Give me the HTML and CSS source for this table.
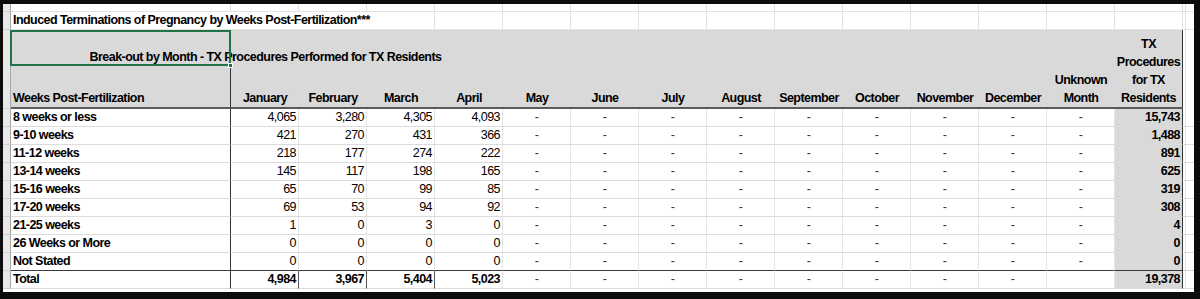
FILE: index.html
```html
<!DOCTYPE html>
<html>
<head>
<meta charset="utf-8">
<link rel="stylesheet" href="styles.css">
</head>
<body>
<div class="frame">
  <div class="row top">
    <div class="g"></div><div></div><div></div><div></div><div></div><div></div><div></div><div></div><div></div><div></div><div></div><div></div><div></div><div></div><div></div><div></div><div class="x"></div>
  </div>
  <div class="row title">
    <div class="g"></div>
    <div class="ttl">Induced Terminations of Pregnancy by Weeks Post-Fertilization***</div>
    <div></div><div></div><div></div><div></div><div></div><div></div><div></div><div></div><div></div><div></div><div></div><div class="x"></div>
  </div>
  <div class="head">
    <div class="g hg"></div>
    <div class="breakout">Break-out by Month - TX Procedures Performed for TX Residents</div>
    <div class="sel"></div>
    <div class="hA">Weeks Post-Fertilization</div>
    <div class="hm">January</div>
    <div class="hm">February</div>
    <div class="hm">March</div>
    <div class="hm">April</div>
    <div class="hm">May</div>
    <div class="hm">June</div>
    <div class="hm">July</div>
    <div class="hm">August</div>
    <div class="hm">September</div>
    <div class="hm">October</div>
    <div class="hm">November</div>
    <div class="hm">December</div>
    <div class="hm">Unknown<br>Month</div>
    <div class="htx">TX<br>Procedures<br>for TX<br>Residents</div>
    <div class="hx"></div>
  </div>

  <div class="row data">
    <div class="g"></div><div class="lab">8 weeks or less</div>
    <div class="n">4,065</div><div class="n">3,280</div><div class="n">4,305</div><div class="n">4,093</div>
    <div class="d">-</div><div class="d">-</div><div class="d">-</div><div class="d">-</div><div class="d">-</div><div class="d">-</div><div class="d">-</div><div class="d">-</div><div class="d">-</div>
    <div class="tx">15,743</div><div class="x"></div>
  </div>
  <div class="row data">
    <div class="g"></div><div class="lab">9-10 weeks</div>
    <div class="n">421</div><div class="n">270</div><div class="n">431</div><div class="n">366</div>
    <div class="d">-</div><div class="d">-</div><div class="d">-</div><div class="d">-</div><div class="d">-</div><div class="d">-</div><div class="d">-</div><div class="d">-</div><div class="d">-</div>
    <div class="tx">1,488</div><div class="x"></div>
  </div>
  <div class="row data">
    <div class="g"></div><div class="lab">11-12 weeks</div>
    <div class="n">218</div><div class="n">177</div><div class="n">274</div><div class="n">222</div>
    <div class="d">-</div><div class="d">-</div><div class="d">-</div><div class="d">-</div><div class="d">-</div><div class="d">-</div><div class="d">-</div><div class="d">-</div><div class="d">-</div>
    <div class="tx">891</div><div class="x"></div>
  </div>
  <div class="row data">
    <div class="g"></div><div class="lab">13-14 weeks</div>
    <div class="n">145</div><div class="n">117</div><div class="n">198</div><div class="n">165</div>
    <div class="d">-</div><div class="d">-</div><div class="d">-</div><div class="d">-</div><div class="d">-</div><div class="d">-</div><div class="d">-</div><div class="d">-</div><div class="d">-</div>
    <div class="tx">625</div><div class="x"></div>
  </div>
  <div class="row data">
    <div class="g"></div><div class="lab">15-16 weeks</div>
    <div class="n">65</div><div class="n">70</div><div class="n">99</div><div class="n">85</div>
    <div class="d">-</div><div class="d">-</div><div class="d">-</div><div class="d">-</div><div class="d">-</div><div class="d">-</div><div class="d">-</div><div class="d">-</div><div class="d">-</div>
    <div class="tx">319</div><div class="x"></div>
  </div>
  <div class="row data">
    <div class="g"></div><div class="lab">17-20 weeks</div>
    <div class="n">69</div><div class="n">53</div><div class="n">94</div><div class="n">92</div>
    <div class="d">-</div><div class="d">-</div><div class="d">-</div><div class="d">-</div><div class="d">-</div><div class="d">-</div><div class="d">-</div><div class="d">-</div><div class="d">-</div>
    <div class="tx">308</div><div class="x"></div>
  </div>
  <div class="row data">
    <div class="g"></div><div class="lab">21-25 weeks</div>
    <div class="n">1</div><div class="n">0</div><div class="n">3</div><div class="n">0</div>
    <div class="d">-</div><div class="d">-</div><div class="d">-</div><div class="d">-</div><div class="d">-</div><div class="d">-</div><div class="d">-</div><div class="d">-</div><div class="d">-</div>
    <div class="tx">4</div><div class="x"></div>
  </div>
  <div class="row data">
    <div class="g"></div><div class="lab">26 Weeks or More</div>
    <div class="n">0</div><div class="n">0</div><div class="n">0</div><div class="n">0</div>
    <div class="d">-</div><div class="d">-</div><div class="d">-</div><div class="d">-</div><div class="d">-</div><div class="d">-</div><div class="d">-</div><div class="d">-</div><div class="d">-</div>
    <div class="tx">0</div><div class="x"></div>
  </div>
  <div class="row data pre-total">
    <div class="g"></div><div class="lab">Not Stated</div>
    <div class="n">0</div><div class="n">0</div><div class="n">0</div><div class="n">0</div>
    <div class="d">-</div><div class="d">-</div><div class="d">-</div><div class="d">-</div><div class="d">-</div><div class="d">-</div><div class="d">-</div><div class="d">-</div><div class="d">-</div>
    <div class="tx">0</div><div class="x"></div>
  </div>
  <div class="row data total">
    <div class="g"></div><div class="lab">Total</div>
    <div class="n sum">4,984</div><div class="n sum">3,967</div><div class="n sum">5,404</div><div class="n">5,023</div>
    <div class="d">-</div><div class="d">-</div><div class="d">-</div><div class="d">-</div><div class="d">-</div><div class="d">-</div><div class="d">-</div><div class="d">-</div><div class="d"></div>
    <div class="tx">19,378</div><div class="x"></div>
  </div>
</div>
</body>
</html>
```

FILE: styles.css
```css
html, body {
  margin: 0;
  padding: 0;
}
body {
  background: #0d0b0b;
  width: 1200px;
  height: 299px;
  overflow: hidden;
}
.frame {
  margin: 4px 6px 0 3px;
  height: 288px;
  background: #ffffff;
  font-family: "Liberation Sans", Arial, sans-serif;
  font-size: 12.5px;
  letter-spacing: -0.55px;
  color: #000;
  overflow: hidden;
}
.row, .head {
  display: grid;
  grid-template-columns: 8px 220px repeat(14, 68px) 11px;
}
.row > div, .head > div {
  box-sizing: border-box;
}
.g {
  background: #e8e8e8;
  border-right: 1px solid #a8a8a8;
  border-bottom: 1px solid #cfcfcf;
}

/* top partial row */
.top {
  height: 8px;
}
.top > div {
  border-right: 1px solid #e2e2e2;
  border-bottom: 1px solid #e2e2e2;
}
.top > .g, .title > .g {
  border-right: 1px solid #a8a8a8;
  border-bottom: 1px solid #cfcfcf;
}

/* title row */
.title {
  height: 18px;
}
.title > div {
  border-right: 1px solid #e2e2e2;
  border-bottom: 1px solid #e2e2e2;
}
.title > .ttl {
  grid-column: 2 / 6;
  font-weight: bold;
  line-height: 17px;
  padding-left: 2px;
  white-space: nowrap;
}
.x {
  background: linear-gradient(to right, transparent 2px, #e2e2e2 2px, #e2e2e2 3px, transparent 3px);
}
.top > .x, .title > .x {
  border-right: none;
}

/* header */
.head {
  grid-template-rows: 36px 43px;
  background: #d9d9d9;
  font-weight: bold;
  line-height: 18px;
}
.head > .hg {
  grid-column: 1;
  grid-row: 1 / 3;
}
.breakout {
  grid-column: 2 / 7;
  grid-row: 1;
  align-self: end;
  text-align: center;
  padding-left: 17px;
  white-space: nowrap;
}
.sel {
  grid-column: 2;
  grid-row: 1;
  position: relative;
  border: 2px solid #217346;
  margin-left: -1px;
}
.sel::after {
  content: "";
  position: absolute;
  right: -4px;
  bottom: -4px;
  width: 5px;
  height: 5px;
  background: #217346;
  border: 1px solid #ffffff;
  box-sizing: border-box;
}
.hA {
  grid-column: 2;
  grid-row: 2;
  display: flex;
  align-items: flex-end;
  padding-left: 2px;
  border-right: 1px solid #333;
  border-bottom: 2px solid #5a5a5a;
}
.hm {
  grid-row: 2;
  display: flex;
  align-items: flex-end;
  justify-content: center;
  text-align: center;
  border-bottom: 2px solid #5a5a5a;
}
.htx {
  grid-column: 16;
  grid-row: 1 / 3;
  display: flex;
  align-items: flex-end;
  justify-content: center;
  text-align: center;
  border-right: 1px solid #333;
  border-bottom: 2px solid #5a5a5a;
}
.hx {
  grid-column: 17;
  grid-row: 1 / 3;
  background: #fff linear-gradient(to right, transparent 2px, #e2e2e2 2px, #e2e2e2 3px, transparent 3px);
}

/* data rows */
.data {
  height: 18px;
  line-height: 17px;
}
.data > div {
  border-bottom: 1px solid #dcdcdc;
  border-right: 1px solid #e4e4e4;
}
.data > .g {
  border-right: 1px solid #a8a8a8;
  border-bottom: 1px solid #cfcfcf;
}
.data > .lab {
  font-weight: bold;
  padding-left: 2px;
  border-right: 1px solid #333;
  white-space: nowrap;
}
.data > .n {
  text-align: right;
  padding-right: 2px;
}
.data > .d {
  text-align: center;
  color: #333;
  font-weight: normal;
}
.data > .tx {
  background: #d9d9d9;
  font-weight: bold;
  text-align: right;
  padding-right: 2px;
  border-right: 1px solid #333;
}
.data > .x {
  border-right: none;
}
.pre-total > div {
  border-bottom: 1px solid #3a3a3a;
}
.pre-total > .g, .pre-total > .x {
  border-bottom: 1px solid #cfcfcf;
}
.total > .n {
  font-weight: bold;
}
.total > .n.sum {
  border-right: 1px solid #555;
}
```
